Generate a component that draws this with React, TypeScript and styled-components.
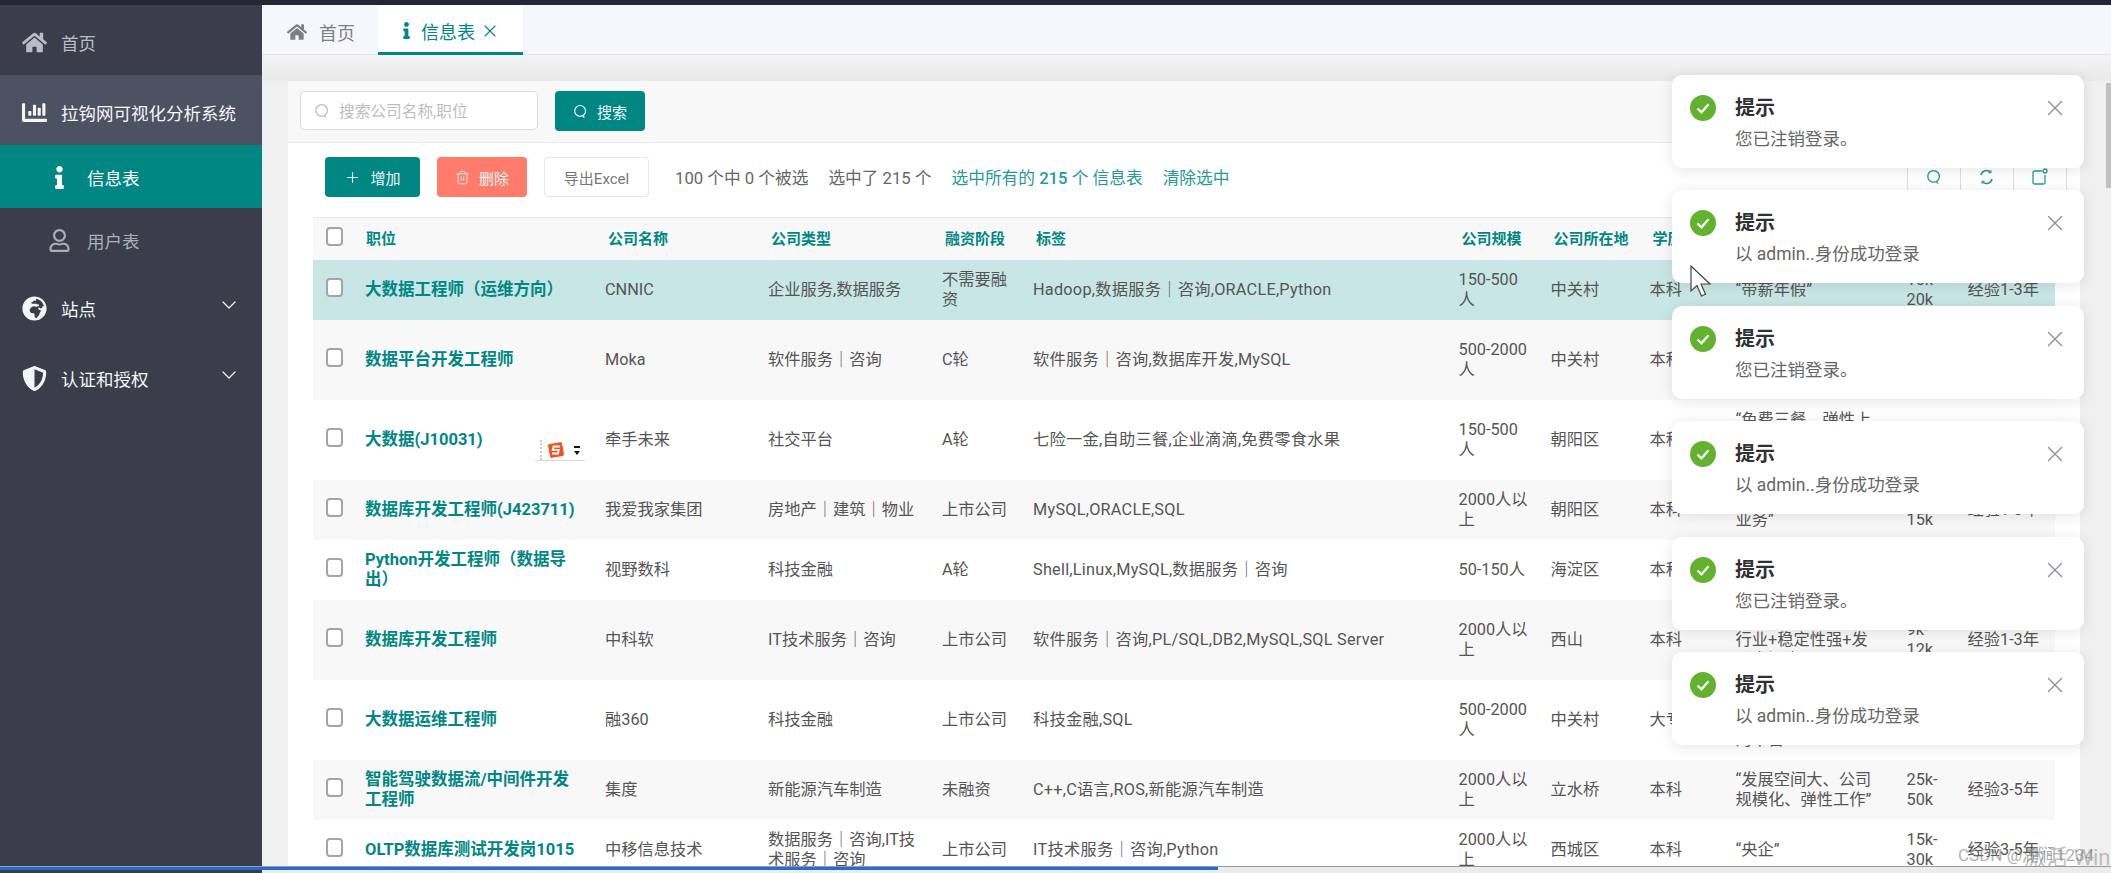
import React from "react";
import styled, { createGlobalStyle } from "styled-components";
import { FaChartBar, FaGlobeAfrica, FaHome, FaInfo, FaRegUser, FaShieldAlt } from "react-icons/fa";
import { ChevronDown, Plus, Trash2, X } from "lucide-react";

const TEAL = "#008784";

const GlobalStyle = createGlobalStyle`
  html, body {
    margin: 0;
    padding: 0;
    background: #f0f0f0;
  }
  * {
    box-sizing: border-box;
  }
  body {
    font-family: Roboto, "Noto Sans CJK SC", sans-serif;
    font-size: 16.25px;
    color: #555;
  }
`;

const Page = styled.div`
  position: relative;
  width: 2111px;
  height: 873px;
  overflow: hidden;
`;

const TopStrip = styled.div`
  height: 5px;
  background: #222733;
`;

const Body = styled.div`
  display: flex;
  height: 868px;
`;

const Sidebar = styled.nav`
  flex: 0 0 262px;
  background: #3a3e4a;
`;

const MenuItem = styled.div<{ $active?: boolean; $muted?: boolean }>`
  display: flex;
  align-items: center;
  gap: 14px;
  height: 70px;
  padding: 5px 21px 0 22px;
  font-size: 17.5px;
  background: ${(p) => (p.$active ? "#4d5263" : "transparent")};
  color: ${(p) => (p.$muted ? "#b7bcc6" : "#f4f5f7")};
  svg.lead {
    flex: 0 0 25px;
    font-size: 25px;
  }
  span {
    flex: 1;
  }
`;

const MenuChevron = styled(ChevronDown)`
  margin-top: -8px;
`;

const SubItem = styled.div<{ $active?: boolean }>`
  display: flex;
  align-items: center;
  gap: 16px;
  height: 63px;
  padding: 2px 0 0 48px;
  font-size: 17.5px;
  background: ${(p) => (p.$active ? TEAL : "transparent")};
  color: ${(p) => (p.$active ? "#fff" : "#a9aeb9")};
  svg {
    flex: 0 0 23px;
    font-size: 23px;
  }
`;

const Main = styled.main`
  flex: 1;
  min-width: 0;
  display: flex;
  flex-direction: column;
`;

const TabBar = styled.div`
  display: flex;
  align-items: flex-start;
  flex: 0 0 50px;
  min-height: 0;
  background: #f6f7fb;
  border-bottom: 1px solid #e4e4e6;
`;

const Tab = styled.div<{ $active?: boolean }>`
  display: flex;
  align-items: center;
  gap: ${(p) => (p.$active ? "6px" : "12px")};
  width: ${(p) => (p.$active ? "145px" : "116px")};
  height: ${(p) => (p.$active ? "50px" : "49px")};
  padding: 4px 0 0 ${(p) => (p.$active ? "20px" : "25px")};
  font-size: 18px;
  background: ${(p) => (p.$active ? "#fff" : "transparent")};
  color: ${(p) => (p.$active ? TEAL : "#7b7f86")};
  border-bottom: ${(p) => (p.$active ? `3px solid ${TEAL}` : "none")};
`;

const TabClose = styled(X)`
  margin-left: -1px;
`;

const Content = styled.div`
  flex: 1;
  min-height: 0;
  padding: 26px 31px 0 25.5px;
  background: linear-gradient(#f4f4f4 0, #e9e9e9 26px, #f0f0f0 26px);
`;

const Card = styled.section`
  height: 100%;
  background: #fff;
  overflow: hidden;
`;

const SearchBar = styled.div`
  display: flex;
  gap: 17px;
  height: 62px;
  padding: 10px 0 0 12.5px;
  background: #f8f8f8;
  border-bottom: 1px solid #ebebeb;
`;

const SearchInput = styled.div`
  display: flex;
  align-items: center;
  gap: 9px;
  width: 238px;
  height: 39px;
  padding-left: 13px;
  background: #fff;
  border: 1px solid #dcdcdc;
  border-radius: 5px;
  color: #bdbdbd;
  font-size: 15.7px;
`;

const Button = styled.div<{ $tone: "teal" | "red" | "plain"; $width: number }>`
  display: flex;
  align-items: center;
  justify-content: center;
  gap: 9px;
  width: ${(p) => p.$width}px;
  height: 40px;
  border-radius: 4px;
  font-size: 15px;
  background: ${(p) => (p.$tone === "teal" ? TEAL : p.$tone === "red" ? "#ff7b6b" : "#fff")};
  color: ${(p) => (p.$tone === "plain" ? "#777" : "#eef7f6")};
  border: ${(p) => (p.$tone === "plain" ? "1px solid #e6e6e6" : "none")};
`;

const ActionRow = styled.div`
  display: flex;
  align-items: center;
  height: 40px;
  margin: 14px 13.5px 20px 37.5px;
`;

const ActionButtons = styled.div`
  display: flex;
  gap: 17px;
  margin-right: 26px;
`;

const ActionText = styled.span<{ $link?: boolean }>`
  margin-right: 20px;
  font-size: 16.7px;
  color: ${(p) => (p.$link ? "#259a97" : "#666")};
  b {
    font-weight: 500;
  }
`;

const ToolGroup = styled.div`
  display: flex;
  align-self: flex-start;
  margin-left: auto;
  height: 33px;
  border-right: 1px solid #ddd;
`;

const ToolCell = styled.div`
  display: flex;
  align-items: flex-end;
  justify-content: center;
  width: 53px;
  padding-bottom: 5px;
  border-left: 1px solid #ddd;
  color: #259a97;
`;

const TableWrap = styled.div`
  padding-left: 25px;
`;

const Table = styled.table`
  width: 1742px;
  table-layout: fixed;
  border-collapse: collapse;
  line-height: 20px;
`;

const Th = styled.th`
  height: 42px;
  padding: 1px 4px 0 11px;
  text-align: left;
  font-size: 15px;
  font-weight: 700;
  color: ${TEAL};
  background: #f8f8f8;
  border-top: 1px solid #e9e9e9;
  white-space: nowrap;
  &:nth-child(2) {
    padding-left: 9px;
  }
`;

const CheckTh = styled(Th)`
  padding: 0;
`;

const Row = styled.tr<{ $selected?: boolean; $even?: boolean }>`
  background: ${(p) => (p.$selected ? "#c8e6e5" : p.$even ? "#f8f8f8" : "#fff")};
`;

const Td = styled.td`
  padding: 10px 12px 10px 8px;
  vertical-align: middle;
  white-space: pre-line;
  word-break: break-word;
`;

const NameTd = styled(Td)`
  padding-right: 14px;
  font-size: 16.5px;
  font-weight: 700;
  color: ${TEAL};
`;

const TagTd = styled(Td)`
  letter-spacing: 0.25px;
`;

const Check = styled.span`
  display: block;
  width: 17px;
  height: 19px;
  margin: -5px 0 0 13px;
  background: #fff;
  border: 2px solid #a4a4a4;
  border-radius: 4px;
`;

const CheckCell = styled.td`
  padding: 0;
  vertical-align: middle;
`;

const ToastStack = styled.div`
  position: absolute;
  top: 75px;
  right: 27px;
  display: flex;
  flex-direction: column;
  gap: 22.4px;
`;

const Toast = styled.div`
  display: flex;
  align-items: flex-start;
  gap: 19px;
  width: 412px;
  height: 93px;
  padding: 20px 16px 0 18px;
  background: #fff;
  border-radius: 10px;
  box-shadow: 0 2px 14px rgba(0, 0, 0, 0.1);
`;

const ToastBody = styled.div`
  flex: 1;
`;

const ToastTitle = styled.div`
  font-size: 20px;
  line-height: 26px;
  font-weight: 700;
  color: #303133;
`;

const ToastMessage = styled.div`
  margin-top: 5px;
  font-size: 17.5px;
  line-height: 26px;
  color: #666;
`;

const SuccessBadge = styled.svg`
  flex: 0 0 26px;
`;

const Cursor = styled.svg`
  position: absolute;
  left: 1690px;
  top: 265px;
`;

const ImeBar = styled.div`
  position: absolute;
  left: 535px;
  top: 440px;
  display: flex;
  align-items: center;
  gap: 6px;
  width: 50px;
  height: 21px;
  padding-left: 5px;
  border-bottom: 1px solid #d8d8d8;
`;

const ImeGrip = styled.span`
  width: 0;
  height: 20px;
  border-left: 2px dotted #ccc;
`;

const ImeArrows = styled.span`
  display: flex;
  flex-direction: column;
  align-items: center;
  gap: 3px;
  margin-left: 4px;
  i {
    width: 6px;
    height: 2px;
    background: #111;
  }
  b {
    width: 0;
    height: 0;
    border: 3px solid transparent;
    border-top: 4px solid #111;
    border-bottom: 0;
  }
`;

const ScrollThumb = styled.div`
  position: absolute;
  top: 83px;
  right: 0;
  width: 5px;
  height: 105px;
  background: #c0c0c0;
`;

const Watermark = styled.div`
  position: absolute;
  left: 1958px;
  top: 845px;
  font-size: 17px;
  line-height: 20px;
  color: rgba(120, 120, 120, 0.6);
  white-space: nowrap;
`;

const Activation = styled.div`
  position: absolute;
  left: 2024px;
  top: 845px;
  font-size: 22px;
  line-height: 26px;
  color: rgba(140, 140, 140, 0.55);
  white-space: nowrap;
`;

const Progress = styled.div`
  position: absolute;
  left: 0;
  right: 0;
  top: 866px;
  height: 7px;
  background: linear-gradient(to right, transparent 262px, #ececec 262px);
  border-top: 1px solid #9a9a9a;
`;

const ProgressFill = styled.div`
  width: 1218px;
  height: 3px;
  background: #1f6fd6;
`;

const SearchGlyph = ({ size = 16 }: { size?: number }) => (
  <svg width={size} height={size} viewBox="0 0 16 16" fill="none" stroke="currentColor" strokeWidth="1.3">
    <circle cx="7.6" cy="7.4" r="5.8" />
    <path d="M10.6 12.6l1.4 2" />
  </svg>
);

const RefreshGlyph = () => (
  <svg width="15" height="16" viewBox="0 0 15 16" fill="none" stroke="currentColor" strokeWidth="1.5">
    <path d="M2 6.2A5.6 5.6 0 0 1 11.6 3.2" />
    <path d="M13 9.8A5.6 5.6 0 0 1 3.4 12.8" />
    <path d="M11.9 1.2v2.6H9.3M3.1 14.8v-2.6h2.6" strokeWidth="1.1" />
  </svg>
);

const ExportGlyph = () => (
  <svg width="16" height="17" viewBox="0 0 16 17" fill="none" stroke="currentColor" strokeWidth="1.3">
    <path d="M10 3H2.5a1.5 1.5 0 0 0-1.5 1.5v10A1.5 1.5 0 0 0 2.5 16h9a1.5 1.5 0 0 0 1.5-1.5V7" />
    <circle cx="13" cy="3" r="2" />
  </svg>
);

const SuccessIcon = () => (
  <SuccessBadge width="26" height="26" viewBox="0 0 26 26">
    <circle cx="13" cy="13" r="13" fill="#62b22f" />
    <path d="M7.5 13.5l4 3.8 7-8" fill="none" stroke="#fff" strokeWidth="2.2" />
  </SuccessBadge>
);

const SogouLogo = () => (
  <svg width="16" height="16" viewBox="0 0 17 17">
    <rect x="1" y="1" width="15" height="15" rx="2" fill="#f4511e" transform="rotate(-10 8.5 8.5)" />
    <path d="M12.6 4.8H6L5 8.4h6.4l-.8 3.8H4.2" fill="none" stroke="#fff" strokeWidth="2" />
  </svg>
);

type Job = {
  name: string;
  company: string;
  kind: string;
  stage: string;
  tags: string;
  size: string;
  place: string;
  edu: string;
  perks: string;
  pay: string;
  exp: string;
};

const JOBS: Job[] = [
  {
    name: "大数据工程师（运维方向）",
    company: "CNNIC",
    kind: "企业服务,数据服务",
    stage: "不需要融资",
    tags: "Hadoop,数据服务｜咨询,ORACLE,Python",
    size: "150-500人",
    place: "中关村",
    edu: "本科",
    perks: "“带薪年假”",
    pay: "10k-20k",
    exp: "经验1-3年",
  },
  {
    name: "数据平台开发工程师",
    company: "Moka",
    kind: "软件服务｜咨询",
    stage: "C轮",
    tags: "软件服务｜咨询,数据库开发,MySQL",
    size: "500-2000人",
    place: "中关村",
    edu: "本科",
    perks: "“五险一金，弹性\n工作，定期体检，\n年度旅游”",
    pay: "15k-30k",
    exp: "经验3-5年",
  },
  {
    name: "大数据(J10031)",
    company: "牵手未来",
    kind: "社交平台",
    stage: "A轮",
    tags: "七险一金,自助三餐,企业滴滴,免费零食水果",
    size: "150-500人",
    place: "朝阳区",
    edu: "本科",
    perks: "“免费三餐，弹性上\n班，带薪年假，节日\n福利，扁平管理”",
    pay: "20k-40k",
    exp: "经验3-5年",
  },
  {
    name: "数据库开发工程师(J423711)",
    company: "我爱我家集团",
    kind: "房地产｜建筑｜物业",
    stage: "上市公司",
    tags: "MySQL,ORACLE,SQL",
    size: "2000人以上",
    place: "朝阳区",
    edu: "本科",
    perks: "“大平台、核心\n业务”",
    pay: "8k-15k",
    exp: "经验1-3年",
  },
  {
    name: "Python开发工程师（数据导出）",
    company: "视野数科",
    kind: "科技金融",
    stage: "A轮",
    tags: "Shell,Linux,MySQL,数据服务｜咨询",
    size: "50-150人",
    place: "海淀区",
    edu: "本科",
    perks: "“技术大牛，扁平管\n理，弹性工作”",
    pay: "15k-25k",
    exp: "经验3-5年",
  },
  {
    name: "数据库开发工程师",
    company: "中科软",
    kind: "IT技术服务｜咨询",
    stage: "上市公司",
    tags: "软件服务｜咨询,PL/SQL,DB2,MySQL,SQL Server",
    size: "2000人以上",
    place: "西山",
    edu: "本科",
    perks: "“国家重点战略性\n行业+稳定性强+发\n展空间大”",
    pay: "9k-12k",
    exp: "经验1-3年",
  },
  {
    name: "大数据运维工程师",
    company: "融360",
    kind: "科技金融",
    stage: "上市公司",
    tags: "科技金融,SQL",
    size: "500-2000人",
    place: "中关村",
    edu: "大专",
    perks: "“金融科技独角兽，\n技术氛围浓厚，成长\n的平台”",
    pay: "10k-20k",
    exp: "经验3-5年",
  },
  {
    name: "智能驾驶数据流/中间件开发工程师",
    company: "集度",
    kind: "新能源汽车制造",
    stage: "未融资",
    tags: "C++,C语言,ROS,新能源汽车制造",
    size: "2000人以上",
    place: "立水桥",
    edu: "本科",
    perks: "“发展空间大、公司\n规模化、弹性工作”",
    pay: "25k-50k",
    exp: "经验3-5年",
  },
  {
    name: "OLTP数据库测试开发岗1015",
    company: "中移信息技术",
    kind: "数据服务｜咨询,IT技术服务｜咨询",
    stage: "上市公司",
    tags: "IT技术服务｜咨询,Python",
    size: "2000人以上",
    place: "西城区",
    edu: "本科",
    perks: "“央企”",
    pay: "15k-30k",
    exp: "经验3-5年",
  },
];

const COLUMNS = [44.5, 240, 163, 174, 91, 425.5, 92, 99, 86, 171, 61, 95];
const HEADERS = ["职位", "公司名称", "公司类型", "融资阶段", "标签", "公司规模", "公司所在地", "学历", "职位福利", "工资", "工作经验"];
const TOASTS = ["您已注销登录。", "以 admin..身份成功登录", "您已注销登录。", "以 admin..身份成功登录", "您已注销登录。", "以 admin..身份成功登录"];

const App: React.FC = () => {
  return (
    <Page>
      <GlobalStyle />
      <TopStrip />
      <Body>
        <Sidebar>
          <MenuItem $muted>
            <FaHome className="lead" />
            <span>首页</span>
          </MenuItem>
          <MenuItem $active>
            <FaChartBar className="lead" />
            <span>拉钩网可视化分析系统</span>
          </MenuItem>
          <SubItem $active>
            <FaInfo />
            信息表
          </SubItem>
          <SubItem>
            <FaRegUser />
            用户表
          </SubItem>
          <MenuItem>
            <FaGlobeAfrica className="lead" />
            <span>站点</span>
            <MenuChevron size={24} strokeWidth={1.2} />
          </MenuItem>
          <MenuItem>
            <FaShieldAlt className="lead" />
            <span>认证和授权</span>
            <MenuChevron size={24} strokeWidth={1.2} />
          </MenuItem>
        </Sidebar>

        <Main>
          <TabBar>
            <Tab>
              <FaHome size={20} />
              首页
            </Tab>
            <Tab $active>
              <FaInfo size={17} />
              信息表
              <TabClose size={20} strokeWidth={1.3} />
            </Tab>
          </TabBar>

          <Content>
            <Card>
              <SearchBar>
                <SearchInput>
                  <SearchGlyph />
                  搜索公司名称,职位
                </SearchInput>
                <Button $tone="teal" $width={90}>
                  <SearchGlyph size={15} />
                  搜索
                </Button>
              </SearchBar>

              <ActionRow>
                <ActionButtons>
                  <Button $tone="teal" $width={95}>
                    <Plus size={17} strokeWidth={1.5} />
                    增加
                  </Button>
                  <Button $tone="red" $width={90}>
                    <Trash2 size={15} strokeWidth={1.4} />
                    删除
                  </Button>
                  <Button $tone="plain" $width={105}>
                    导出Excel
                  </Button>
                </ActionButtons>
                <ActionText>100 个中 0 个被选</ActionText>
                <ActionText>选中了 215 个</ActionText>
                <ActionText $link>
                  选中所有的 <b>215</b> 个 信息表
                </ActionText>
                <ActionText $link>清除选中</ActionText>
                <ToolGroup>
                  <ToolCell>
                    <SearchGlyph />
                  </ToolCell>
                  <ToolCell>
                    <RefreshGlyph />
                  </ToolCell>
                  <ToolCell>
                    <ExportGlyph />
                  </ToolCell>
                </ToolGroup>
              </ActionRow>

              <TableWrap>
                <Table>
                  <colgroup>
                    {COLUMNS.map((width, i) => (
                      <col key={i} width={width} />
                    ))}
                  </colgroup>
                  <thead>
                    <tr>
                      <CheckTh>
                        <Check />
                      </CheckTh>
                      {HEADERS.map((title) => (
                        <Th key={title}>{title}</Th>
                      ))}
                    </tr>
                  </thead>
                  <tbody>
                    {JOBS.map((job, i) => (
                      <Row key={job.name} $selected={i === 0} $even={i % 2 === 1}>
                        <CheckCell>
                          <Check />
                        </CheckCell>
                        <NameTd>{job.name}</NameTd>
                        <Td>{job.company}</Td>
                        <Td>{job.kind}</Td>
                        <Td>{job.stage}</Td>
                        <TagTd>{job.tags}</TagTd>
                        <Td>{job.size}</Td>
                        <Td>{job.place}</Td>
                        <Td>{job.edu}</Td>
                        <Td>{job.perks}</Td>
                        <Td>{job.pay}</Td>
                        <Td>{job.exp}</Td>
                      </Row>
                    ))}
                  </tbody>
                </Table>
              </TableWrap>
            </Card>
          </Content>
        </Main>
      </Body>

      <ImeBar>
        <ImeGrip />
        <SogouLogo />
        <ImeArrows>
          <i />
          <b />
        </ImeArrows>
      </ImeBar>

      <ToastStack>
        {TOASTS.map((message, i) => (
          <Toast key={i}>
            <SuccessIcon />
            <ToastBody>
              <ToastTitle>提示</ToastTitle>
              <ToastMessage>{message}</ToastMessage>
            </ToastBody>
            <X size={26} strokeWidth={1.3} color="#8f9399" />
          </Toast>
        ))}
      </ToastStack>

      <Cursor width="24" height="34" viewBox="0 0 24 34">
        <path d="M1 1v25l6-5.5 4.5 10.5 4-1.8L11 19h9z" fill="#fff" stroke="#444" strokeWidth="1.2" />
      </Cursor>

      <ScrollThumb />
      <Activation>激活 Windows</Activation>
      <Watermark>CSDN @湖涧1234</Watermark>
      <Progress>
        <ProgressFill />
      </Progress>
    </Page>
  );
};

export default App;
